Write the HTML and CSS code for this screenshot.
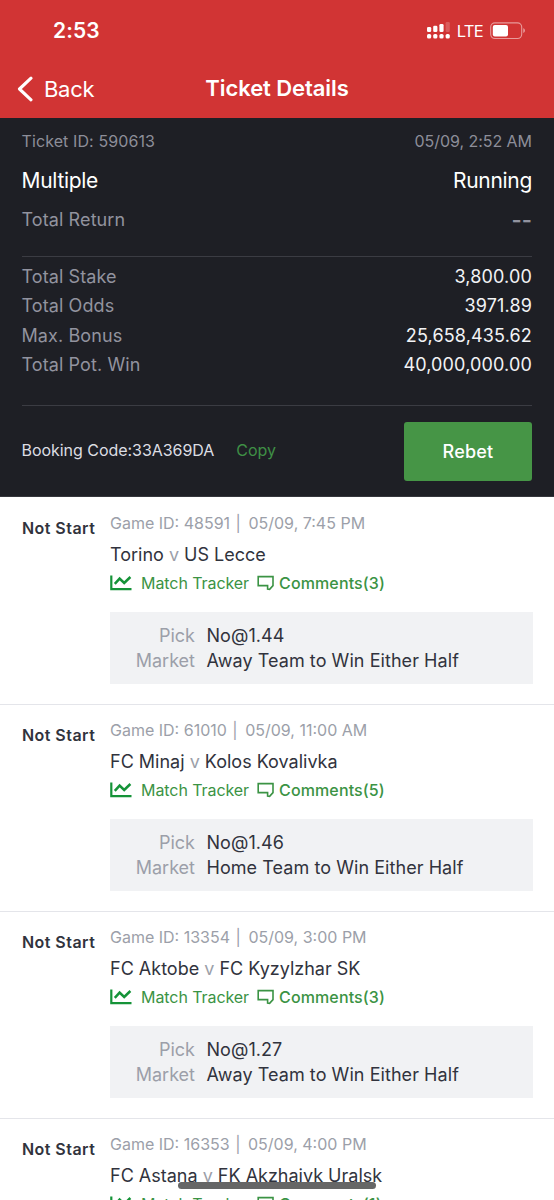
FILE: index.html
```html
<!DOCTYPE html>
<html lang="en">
<head>
<meta charset="utf-8">
<title>Ticket Details</title>
<link rel="stylesheet" href="styles.css">
</head>
<body>
<svg width="0" height="0" class="defs">
  <symbol id="chart" viewBox="0 0 22 16"><path d="M1.3 0.5V14.2H21.5" fill="none" stroke="currentColor" stroke-width="2.2"/><path d="M4.8 8.8L9.6 3.6L14.2 8L20.4 2" fill="none" stroke="currentColor" stroke-width="2.5"/></symbol>
  <symbol id="bubble" viewBox="0 0 18 16"><path d="M1.2 1.6H16V10.6L12.6 14.4L10.6 14V10.6H1.2Z" fill="none" stroke="currentColor" stroke-width="1.6"/></symbol>
</svg>
<div class="screen">
  <header class="header">
    <div class="status">
      <span class="clock">2:53</span>
      <div class="indicators">
        <svg class="signal" width="24" height="17" viewBox="0 0 24 17" fill="#fff"><rect x="0" y="5" width="4.2" height="5" rx="1.3"/><rect x="6.2" y="3.7" width="4.2" height="6.3" rx="1.3"/><rect x="12.4" y="2" width="4.2" height="8" rx="1.3"/><rect x="18.6" y="0" width="4.2" height="10" rx="1.3" opacity=".2"/><rect x="0" y="12" width="4.2" height="4.5" rx="1.6"/><rect x="6.2" y="12" width="4.2" height="4.5" rx="1.6"/><rect x="12.4" y="12" width="4.2" height="4.5" rx="1.6"/><rect x="18.6" y="12" width="4.2" height="4.5" rx="1.6"/></svg>
        <span class="network">LTE</span>
        <svg class="battery" width="36" height="18" viewBox="0 0 36 18"><rect x=".7" y=".9" width="31" height="15.6" rx="4.2" fill="none" stroke="#fff" stroke-opacity=".5" stroke-width="1.1"/><rect x="2.8" y="3" width="15.2" height="11.4" rx="2" fill="#fff"/><path d="M33.4 6.3C35.3 7 35.3 10.2 33.4 10.9Z" fill="#fff" opacity=".6"/></svg>
      </div>
    </div>
    <nav class="nav">
      <a class="back"><svg width="16" height="26" viewBox="0 0 16 26"><path d="M14 2.2L2.5 13L14 23.8" fill="none" stroke="#fff" stroke-width="3.1" stroke-linecap="round" stroke-linejoin="round"/></svg><span>Back</span></a>
      <h1 class="title">Ticket Details</h1>
    </nav>
  </header>
  <section class="ticket">
    <div class="row meta"><span class="tid">Ticket ID: 590613</span><span class="date">05/09, 2:52 AM</span></div>
    <div class="row kind"><span>Multiple</span><span class="running">Running</span></div>
    <div class="row return"><span class="label">Total Return</span><span class="dash">--</span></div>
    <div class="totals">
      <div class="row"><span class="label">Total Stake</span><span>3,800.00</span></div>
      <div class="row"><span class="label">Total Odds</span><span>3971.89</span></div>
      <div class="row"><span class="label">Max. Bonus</span><span>25,658,435.62</span></div>
      <div class="row"><span class="label">Total Pot. Win</span><span>40,000,000.00</span></div>
    </div>
    <div class="booking"><span class="code">Booking Code:33A369DA</span><a class="copy">Copy</a><button class="rebet">Rebet</button></div>
  </section>
  <main class="events">
    <article class="event">
      <div class="state">Not Start</div>
      <div class="detail">
        <div class="game"><span>Game ID: 48591</span><span class="bar">|</span><span>05/09, 7:45 PM</span></div>
        <div class="teams">Torino <i>v</i> US Lecce</div>
        <div class="links"><svg class="chart"><use href="#chart"/></svg><span class="tracker">Match Tracker</span><svg class="bubble"><use href="#bubble"/></svg><span class="comments">Comments(3)</span></div>
        <div class="pick"><span class="key">Pick</span><span>No@1.44</span><span class="key">Market</span><span>Away Team to Win Either Half</span></div>
      </div>
    </article>
    <article class="event">
      <div class="state">Not Start</div>
      <div class="detail">
        <div class="game"><span>Game ID: 61010</span><span class="bar">|</span><span>05/09, 11:00 AM</span></div>
        <div class="teams">FC Minaj <i>v</i> Kolos Kovalivka</div>
        <div class="links"><svg class="chart"><use href="#chart"/></svg><span class="tracker">Match Tracker</span><svg class="bubble"><use href="#bubble"/></svg><span class="comments">Comments(5)</span></div>
        <div class="pick"><span class="key">Pick</span><span>No@1.46</span><span class="key">Market</span><span>Home Team to Win Either Half</span></div>
      </div>
    </article>
    <article class="event">
      <div class="state">Not Start</div>
      <div class="detail">
        <div class="game"><span>Game ID: 13354</span><span class="bar">|</span><span>05/09, 3:00 PM</span></div>
        <div class="teams">FC Aktobe <i>v</i> FC Kyzylzhar SK</div>
        <div class="links"><svg class="chart"><use href="#chart"/></svg><span class="tracker">Match Tracker</span><svg class="bubble"><use href="#bubble"/></svg><span class="comments">Comments(3)</span></div>
        <div class="pick"><span class="key">Pick</span><span>No@1.27</span><span class="key">Market</span><span>Away Team to Win Either Half</span></div>
      </div>
    </article>
    <article class="event">
      <div class="state">Not Start</div>
      <div class="detail">
        <div class="game"><span>Game ID: 16353</span><span class="bar">|</span><span>05/09, 4:00 PM</span></div>
        <div class="teams">FC Astana <i>v</i> FK Akzhaivk Uralsk</div>
        <div class="links"><svg class="chart"><use href="#chart"/></svg><span class="tracker">Match Tracker</span><svg class="bubble"><use href="#bubble"/></svg><span class="comments">Comments(1)</span></div>
      </div>
    </article>
  </main>
  <div class="home-indicator"></div>
</div>
</body>
</html>
```
FILE: styles.css
```css
* { box-sizing: border-box; }
body { margin: 0; background: #fff; font-family: Inter, "Liberation Sans", sans-serif; color: #31333d; }
.defs { position: absolute; }
.screen { position: relative; width: 554px; height: 1200px; overflow: hidden; }

.header { height: 118px; background: #d13434; color: #fff; }
.status { display: flex; justify-content: space-between; height: 60px; padding: 0 28px 0 53px; line-height: 62px; }
.clock { font-size: 21px; font-weight: 600; letter-spacing: .1px; }
.indicators { display: flex; align-items: center; padding-top: 1px; }
.network { margin: 0 7px 0 6px; font-size: 16.5px; letter-spacing: -.7px; }
.nav { display: grid; grid-template-columns: 1fr auto 1fr; align-items: center; height: 57px; padding: 0 17px; line-height: 30px; }
.back { display: flex; align-items: center; gap: 11px; font-size: 22px; letter-spacing: -.3px; }
.title { margin: 0; font-size: 22px; line-height: 28px; padding-bottom: 2px; font-weight: 600; letter-spacing: -.08px; }

.ticket { height: 379px; padding: 12px 22px 0 21.5px; background: #1e1f25; color: #f2f3f5; border-bottom: 1px solid #35363c; }
.row { display: flex; justify-content: space-between; white-space: nowrap; }
.meta { height: 23px; line-height: 23px; font-size: 16px; color: #8d8e99; }
.tid { letter-spacing: .1px; }
.date { letter-spacing: -.05px; }
.kind { margin-top: 13px; height: 30px; line-height: 30px; font-size: 21px; color: #fff; letter-spacing: -.3px; }
.return { margin-top: 9px; height: 30px; line-height: 30px; font-size: 18px; }
.label { color: #92939f; letter-spacing: .1px; }
.dash { color: #92939f; font-size: 22px; font-weight: 600; }
.totals { height: 150px; margin-top: 21px; padding-top: 4.5px; border-top: 1px solid #3b3c43; border-bottom: 1px solid #3b3c43; font-size: 18px; line-height: 29.5px; letter-spacing: .15px; }
.booking { display: flex; align-items: flex-start; padding-top: 16px; font-size: 16px; line-height: 57px; letter-spacing: -.04px; }
.code { color: #dcdde3; }
.copy { margin-left: 22px; color: #3f8f45; }
.rebet { width: 128px; height: 59px; margin-left: auto; padding: 0; border: 0; border-radius: 3px; background: #469546; color: #fff; font: 500 18px Inter, sans-serif; letter-spacing: .2px; }

.event { display: flex; height: 207px; padding: 0 21px 0 22px; border-bottom: 1px solid #e4e5ea; }
.event:first-child { height: 208px; padding-top: 1px; }
.state { flex: 0 0 88px; padding-top: 18px; font-size: 16px; line-height: 24px; font-weight: 600; letter-spacing: .45px; white-space: nowrap; }
.detail { flex: 1; padding-top: 13px; }
.game { display: flex; height: 24px; line-height: 24px; font-size: 16px; color: #9c9fa9; white-space: nowrap; }
.bar { margin: 0 7.5px 0 5.5px; }
.teams { margin-top: 6px; height: 28px; line-height: 28px; font-size: 18px; white-space: nowrap; }
.teams i { font-style: normal; color: #9c9fa9; }
.links { display: flex; align-items: center; height: 28px; line-height: 28px; font-size: 16px; color: #3b9344; }
.chart { width: 22px; height: 16px; margin-right: 9px; color: #159338; }
.bubble { width: 18px; height: 16px; margin: 0 4px 0 8px; }
.tracker { letter-spacing: -.07px; }
.comments { font-weight: 500; letter-spacing: .12px; }
.pick { display: grid; grid-template-columns: 85px 1fr; grid-auto-rows: 25px; column-gap: 11.5px; height: 72px; margin-top: 15px; padding-top: 11px; background: #f1f2f4; font-size: 18px; line-height: 25px; letter-spacing: .06px; white-space: nowrap; }
.key { text-align: right; color: #9c9fa9; letter-spacing: 0; }
.home-indicator { position: absolute; left: 178px; top: 1182px; width: 198px; height: 7px; border-radius: 4px; background: #666; }
```
